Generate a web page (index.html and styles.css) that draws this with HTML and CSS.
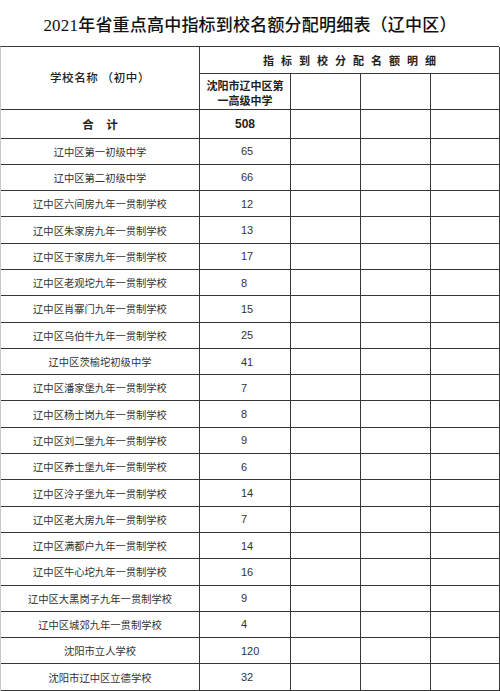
FILE: index.html
```html
<!DOCTYPE html>
<html lang="zh-CN">
<head>
<meta charset="utf-8">
<title>2021年省重点高中指标到校名额分配明细表（辽中区）</title>
<link rel="stylesheet" href="styles.css">
</head>
<body>
<div class="sheet">
  <h1 class="title">2021年省重点高中指标到校名额分配明细表（辽中区）</h1>
  <div class="grid">
    <div class="cell head-name">学校名称 （初中）</div>
    <div class="cell head-alloc">指标到校分配名额明细</div>
    <div class="cell head-school">沈阳市辽中区第<br>一高级中学</div>
    <div class="cell"></div>
    <div class="cell"></div>
    <div class="cell"></div>

    <div class="cell total-label">合 计</div>
    <div class="cell total-num">508</div>
    <div class="cell"></div><div class="cell"></div><div class="cell"></div>

    <div class="cell name">辽中区第一初级中学</div><div class="cell num">65</div><div class="cell"></div><div class="cell"></div><div class="cell"></div>
    <div class="cell name">辽中区第二初级中学</div><div class="cell num">66</div><div class="cell"></div><div class="cell"></div><div class="cell"></div>
    <div class="cell name">辽中区六间房九年一贯制学校</div><div class="cell num">12</div><div class="cell"></div><div class="cell"></div><div class="cell"></div>
    <div class="cell name">辽中区朱家房九年一贯制学校</div><div class="cell num">13</div><div class="cell"></div><div class="cell"></div><div class="cell"></div>
    <div class="cell name">辽中区于家房九年一贯制学校</div><div class="cell num">17</div><div class="cell"></div><div class="cell"></div><div class="cell"></div>
    <div class="cell name">辽中区老观坨九年一贯制学校</div><div class="cell num">8</div><div class="cell"></div><div class="cell"></div><div class="cell"></div>
    <div class="cell name">辽中区肖寨门九年一贯制学校</div><div class="cell num">15</div><div class="cell"></div><div class="cell"></div><div class="cell"></div>
    <div class="cell name">辽中区乌伯牛九年一贯制学校</div><div class="cell num">25</div><div class="cell"></div><div class="cell"></div><div class="cell"></div>
    <div class="cell name">辽中区茨榆坨初级中学</div><div class="cell num">41</div><div class="cell"></div><div class="cell"></div><div class="cell"></div>
    <div class="cell name">辽中区潘家堡九年一贯制学校</div><div class="cell num">7</div><div class="cell"></div><div class="cell"></div><div class="cell"></div>
    <div class="cell name">辽中区杨士岗九年一贯制学校</div><div class="cell num">8</div><div class="cell"></div><div class="cell"></div><div class="cell"></div>
    <div class="cell name">辽中区刘二堡九年一贯制学校</div><div class="cell num">9</div><div class="cell"></div><div class="cell"></div><div class="cell"></div>
    <div class="cell name">辽中区养士堡九年一贯制学校</div><div class="cell num">6</div><div class="cell"></div><div class="cell"></div><div class="cell"></div>
    <div class="cell name">辽中区泠子堡九年一贯制学校</div><div class="cell num">14</div><div class="cell"></div><div class="cell"></div><div class="cell"></div>
    <div class="cell name">辽中区老大房九年一贯制学校</div><div class="cell num">7</div><div class="cell"></div><div class="cell"></div><div class="cell"></div>
    <div class="cell name">辽中区满都户九年一贯制学校</div><div class="cell num">14</div><div class="cell"></div><div class="cell"></div><div class="cell"></div>
    <div class="cell name">辽中区牛心坨九年一贯制学校</div><div class="cell num">16</div><div class="cell"></div><div class="cell"></div><div class="cell"></div>
    <div class="cell name">辽中区大黑岗子九年一贯制学校</div><div class="cell num">9</div><div class="cell"></div><div class="cell"></div><div class="cell"></div>
    <div class="cell name">辽中区城郊九年一贯制学校</div><div class="cell num">4</div><div class="cell"></div><div class="cell"></div><div class="cell"></div>
    <div class="cell name">沈阳市立人学校</div><div class="cell num">120</div><div class="cell"></div><div class="cell"></div><div class="cell"></div>
    <div class="cell name">沈阳市辽中区立德学校</div><div class="cell num">32</div><div class="cell"></div><div class="cell"></div><div class="cell"></div>
  </div>
</div>
</body>
</html>
```

FILE: styles.css
```css
html, body {
  margin: 0;
  padding: 0;
  background: #ffffff;
}

body {
  font-family: "Noto Sans CJK SC", "Noto Sans", sans-serif;
  color: #2a2a2a;
}

.sheet {
  width: 500px;
  height: 691px;
  overflow: hidden;
}

.title {
  margin: 0;
  height: 46px;
  display: flex;
  align-items: center;
  justify-content: center;
  font-family: "Liberation Serif", "Noto Sans CJK SC", serif;
  font-size: 17px;
  font-weight: 500;
  color: #111;
  letter-spacing: 0.2px;
  box-sizing: border-box;
  padding-top: 1px;
}

.grid {
  display: grid;
  grid-template-columns: 199px 91px 70px 70px 69px;
  grid-template-rows: 27px 36px 28.5px repeat(21, 26.3px);
  border-top: 1px solid #383838;
  border-left: 1px solid #c8c8c8;
  width: 499px;
  box-sizing: border-box;
}

.cell {
  box-sizing: border-box;
  border-right: 1px solid #383838;
  border-bottom: 1px solid #383838;
  display: flex;
  align-items: center;
  justify-content: center;
  min-width: 0;
}

.head-name {
  grid-row: 1 / span 2;
  font-size: 11.5px;
  font-weight: 500;
  letter-spacing: 0.6px;
  color: #222;
  padding-bottom: 2px;
}

.head-alloc {
  grid-column: 2 / span 4;
  font-size: 11px;
  font-weight: 700;
  letter-spacing: 7px;
  color: #222;
  padding-left: 7px;
}

.head-school {
  font-size: 11px;
  font-weight: 700;
  line-height: 15px;
  text-align: center;
  color: #1e1e1e;
  padding-top: 2px;
}

.total-label {
  font-size: 11.5px;
  font-weight: 700;
  letter-spacing: 5px;
  padding-left: 5px;
  color: #1e1e1e;
}

.total-num {
  font-family: "Liberation Sans", "Noto Sans CJK SC", sans-serif;
  font-size: 12px;
  font-weight: 700;
  color: #1e1e1e;
}

.name {
  font-size: 10.3px;
  color: #333;
}

.num {
  justify-content: flex-start;
  padding-left: 41px;
  font-family: "Liberation Sans", "Noto Sans", sans-serif;
  font-size: 11px;
  color: #333;
}
```
